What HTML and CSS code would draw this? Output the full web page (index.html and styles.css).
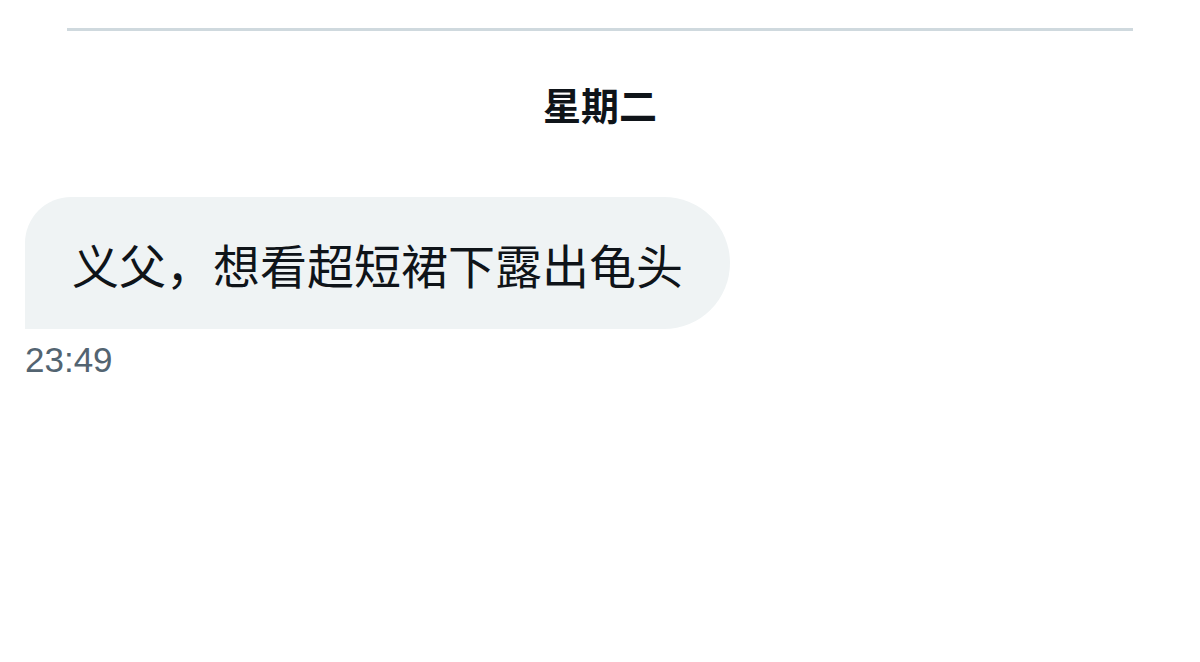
FILE: index.html
```html
<!DOCTYPE html>
<html lang="zh">
<head>
  <meta charset="UTF-8">
  <meta name="viewport" content="width=device-width, initial-scale=1.0">
  <title>Messages</title>
  <link rel="stylesheet" href="styles.css">
</head>
<body>
  <div class="thread">
    <div class="divider"></div>
    <div class="day">星期二</div>
    <div class="message">
      <div class="bubble">义父，想看超短裙下露出龟头</div>
      <div class="time">23:49</div>
    </div>
  </div>
</body>
</html>
```

FILE: styles.css
```css
body {
  margin: 0;
  padding: 0;
  background-color: #ffffff;
  font-family: "Liberation Sans", "Noto Sans CJK SC", sans-serif;
  color: #0f1419;
}
.thread {
  width: 1200px;
  height: 662px;
  overflow: hidden;
}
.divider {
  margin: 28px 67px 0;
  height: 3px;
  background-color: #cfd9de;
}
.day {
  margin-top: 52px;
  text-align: center;
  font-size: 38px;
  line-height: 48px;
  font-weight: bold;
}
.message {
  margin-top: 66px;
  padding-left: 25px;
  display: flex;
  flex-direction: column;
  align-items: flex-start;
}
.bubble {
  background-color: #eff3f4;
  border-radius: 46px 66px 66px 0;
  padding: 0 47px;
  height: 132px;
  display: flex;
  align-items: center;
  font-size: 47px;
}
.time {
  margin-top: 10px;
  font-size: 35px;
  line-height: 42px;
  color: #536471;
}
```
